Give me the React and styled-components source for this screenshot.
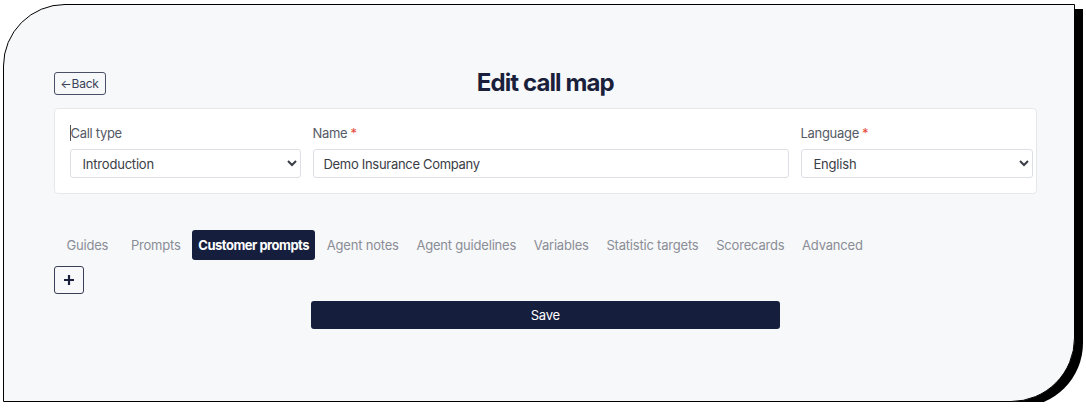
import React from "react";
import styled, { createGlobalStyle } from "styled-components";

const Global = createGlobalStyle`
  html, body { margin: 0; padding: 0; background: #ffffff; }
  body { font-family: Inter, "Noto Sans", sans-serif; }
  * { box-sizing: border-box; }
`;

const Frame = styled.div`
  margin: 4px 0 0 3px;
  width: 1072px;
  height: 398px;
  background: #f7f8fa;
  border: 1.5px solid #000;
  border-top-left-radius: 62px;
  border-bottom-right-radius: 64px;
  box-shadow: 8px 5px 0 #000;
  padding: 65px 37px 0 49.5px;
  display: flex;
  flex-direction: column;
`;

const Header = styled.div`
  display: grid;
  grid-template-columns: 1fr auto 1fr;
  align-items: center;
  height: 24px;
  margin-top: 1px;
`;

const BackButton = styled.button`
  justify-self: start;
  height: 23px;
  width: 52px;
  padding: 0;
  border: 1px solid #4a4f68;
  border-radius: 3px;
  background: #f7f8fa;
  color: #3a3f58;
  font-family: Inter, sans-serif;
  font-size: 12px;
  letter-spacing: -0.2px;
  display: flex;
  align-items: center;
  justify-content: center;
`;

const Title = styled.h1`
  margin: 0;
  font-size: 24px;
  font-weight: 700;
  letter-spacing: -0.9px;
  color: #1a1f3b;
  line-height: 24px;
`;

const FormCard = styled.div`
  margin-top: 13px;
  background: #fff;
  border: 1px solid #e6e8ec;
  border-radius: 4px;
  padding: 15px 4px 15px 15px;
  display: grid;
  grid-template-columns: 231px 476px 232px;
  column-gap: 12px;
`;

const Field = styled.div`
  display: flex;
  flex-direction: column;
  gap: 7px;
`;

const Label = styled.label`
  font-size: 13px;
  line-height: 18px;
  color: #555a66;
  letter-spacing: -0.3px;
  display: flex;
  align-items: center;
`;

const Caret = styled.span`
  display: inline-block;
  width: 1px;
  height: 16px;
  background: #555;
`;

const Required = styled.span`
  color: #e5483d;
  margin-left: 3px;
`;

const Select = styled.select`
  height: 29px;
  border: 1px solid #dcdfe5;
  border-radius: 3px;
  background: #fff;
  font-family: Inter, sans-serif;
  font-size: 13px;
  color: #3a3d45;
  padding: 0 4px 0 8px;
  letter-spacing: -0.2px;
  outline: none;
`;

const Input = styled.input`
  height: 29px;
  border: 1px solid #dcdfe5;
  border-radius: 3px;
  background: #fff;
  font-family: Inter, sans-serif;
  font-size: 13px;
  color: #3a3d45;
  padding: 0 10px;
  letter-spacing: -0.3px;
  outline: none;
`;

const Tabs = styled.div`
  margin-top: 36px;
  margin-left: 7px;
  display: flex;
  gap: 5.7px;
  align-items: center;
`;

const Tab = styled.button`
  height: 30px;
  padding: 0 6px;
  border: none;
  border-radius: 3px;
  background: ${(p) => (p.$active ? "#161e3d" : "transparent")};
  color: ${(p) => (p.$active ? "#ffffff" : "#8a8d96")};
  font-family: Inter, sans-serif;
  font-size: 13px;
  font-weight: ${(p) => (p.$active ? 700 : 400)};
  letter-spacing: ${(p) => (p.$active ? "-0.5px" : "-0.2px")};
  white-space: nowrap;
  &:first-child {
    margin-right: 5px;
  }
`;

const AddButton = styled.button`
  margin-top: 6px;
  width: 30px;
  height: 28px;
  border: 1px solid #3a3f58;
  border-radius: 3px;
  background: #f7f8fa;
  color: #1a1f3b;
  display: flex;
  align-items: center;
  justify-content: center;
  padding: 0;
`;

const SaveRow = styled.div`
  display: flex;
  justify-content: center;
  margin-top: 7px;
`;

const SaveButton = styled.button`
  width: 469px;
  height: 28px;
  border: none;
  border-radius: 3px;
  background: #161e3d;
  color: #fff;
  font-family: Inter, sans-serif;
  font-size: 13px;
  letter-spacing: -0.3px;
`;

const tabs = [
  "Guides",
  "Prompts",
  "Customer prompts",
  "Agent notes",
  "Agent guidelines",
  "Variables",
  "Statistic targets",
  "Scorecards",
  "Advanced",
];

export default function App() {
  return (
    <>
      <Global />
      <Frame>
        <Header>
          <BackButton>←Back</BackButton>
          <Title>Edit call map</Title>
          <span />
        </Header>
        <FormCard>
          <Field>
            <Label>
              <Caret />
              Call type
            </Label>
            <Select defaultValue="Introduction">
              <option>Introduction</option>
            </Select>
          </Field>
          <Field>
            <Label>
              Name<Required>*</Required>
            </Label>
            <Input defaultValue="Demo Insurance Company" />
          </Field>
          <Field>
            <Label>
              Language<Required>*</Required>
            </Label>
            <Select defaultValue="English">
              <option>English</option>
            </Select>
          </Field>
        </FormCard>
        <Tabs>
          {tabs.map((t) => (
            <Tab key={t} $active={t === "Customer prompts"}>
              {t}
            </Tab>
          ))}
        </Tabs>
        <AddButton>
          <svg width="12" height="12" viewBox="0 0 12 12">
            <path d="M6 1v10M1 6h10" stroke="#1a1f3b" strokeWidth="2.2" />
          </svg>
        </AddButton>
        <SaveRow>
          <SaveButton>Save</SaveButton>
        </SaveRow>
      </Frame>
    </>
  );
}
